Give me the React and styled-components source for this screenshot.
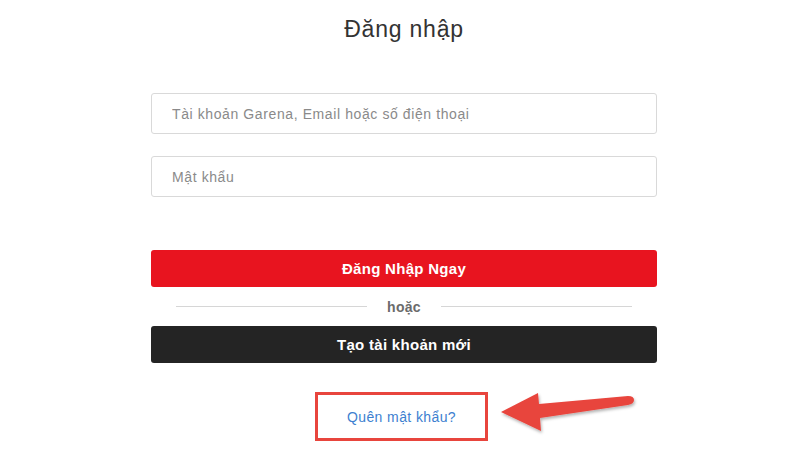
import React from "react";
import styled, { createGlobalStyle } from "styled-components";

const GlobalStyle = createGlobalStyle`
  html, body {
    margin: 0;
    padding: 0;
    background: #ffffff;
    font-family: "Liberation Sans", Arial, sans-serif;
  }
`;

const Page = styled.div`
  position: relative;
  width: 800px;
  height: 450px;
  overflow: hidden;
  background: #fff;
`;

const Form = styled.div`
  width: 506px;
  margin-left: 151px;
  display: flex;
  flex-direction: column;
`;

const Title = styled.h1`
  margin: 14px 0 0;
  text-align: center;
  font-size: 23px;
  font-weight: 400;
  letter-spacing: 0.8px;
  color: #333;
  height: 30px;
  line-height: 30px;
`;

const Input = styled.input`
  box-sizing: border-box;
  width: 100%;
  height: 41px;
  margin-top: ${(p) => p.$top}px;
  padding: 0 20px;
  border: 1px solid #d9d9d9;
  border-radius: 3px;
  font-family: inherit;
  font-size: 14px;
  letter-spacing: 0.6px;
  color: #333;
  outline: none;

  &::placeholder {
    color: #8a8a8a;
  }
`;

const Button = styled.button`
  box-sizing: border-box;
  width: 100%;
  height: 37px;
  border: none;
  border-radius: 3px;
  background: ${(p) => p.$bg};
  color: #fff;
  font-family: inherit;
  font-size: 15px;
  font-weight: 700;
  letter-spacing: 0.3px;
  margin-top: ${(p) => p.$top || 0}px;
`;

const Divider = styled.div`
  display: flex;
  align-items: center;
  gap: 20px;
  height: 39px;
  padding: 0 25px;
`;

const Line = styled.div`
  flex: 1;
  height: 1px;
  background: #d6d6d6;
`;

const Or = styled.span`
  font-size: 14px;
  font-weight: 700;
  color: #6b6b6b;
  letter-spacing: 0.3px;
`;

const Highlight = styled.div`
  align-self: flex-start;
  box-sizing: border-box;
  width: 173px;
  height: 49px;
  margin: 29px 0 0 164px;
  border: 3px solid #e8453d;
  display: flex;
  align-items: center;
  justify-content: center;
`;

const Link = styled.a`
  font-size: 14px;
  color: #3d7fd0;
  text-decoration: none;
  letter-spacing: 0.4px;
`;

const Arrow = styled.svg`
  position: absolute;
  left: 494px;
  top: 387px;
  overflow: visible;
`;

export default function App() {
  return (
    <Page>
      <GlobalStyle />
      <Form>
        <Title>Đăng nhập</Title>
        <Input $top={49} placeholder="Tài khoản Garena, Email hoặc số điện thoại" />
        <Input $top={22} type="password" placeholder="Mật khẩu" />
        <Button $bg="#e8141f" $top={53}>Đăng Nhập Ngay</Button>
        <Divider>
          <Line />
          <Or>hoặc</Or>
          <Line />
        </Divider>
        <Button $bg="#242424">Tạo tài khoản mới</Button>
        <Highlight>
          <Link href="#">Quên mật khẩu?</Link>
        </Highlight>
      </Form>
      <Arrow width="145" height="50" viewBox="0 0 145 50">
        <defs>
          <filter id="sh" x="-20%" y="-40%" width="140%" height="180%">
            <feDropShadow dx="1" dy="2" stdDeviation="1.5" floodColor="#000" floodOpacity="0.3" />
          </filter>
        </defs>
        <path
          d="M7 25 L44 6 L45 17 L134 9 Q140 9 140 13 Q140 17 134 18 L46 31 L47 44 Z"
          fill="#e8453d"
          filter="url(#sh)"
        />
      </Arrow>
    </Page>
  );
}
